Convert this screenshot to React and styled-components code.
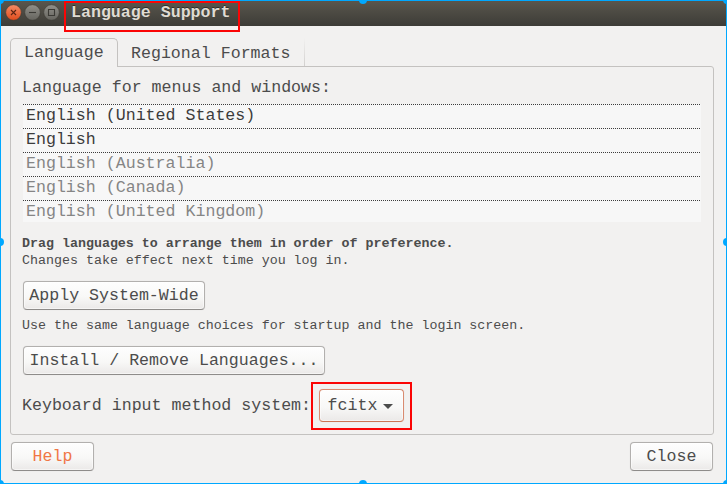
import React from 'react';
import styled, { createGlobalStyle, css } from 'styled-components';

const GlobalStyle = createGlobalStyle`
  * { box-sizing: border-box; }
  body { margin: 0; background: #f2f1f0; }
`;

const Window = styled.main`
  position: relative;
  display: flex;
  flex-direction: column;
  width: 727px;
  height: 484px;
  overflow: hidden;
  border: 1px solid #00a8ff;
  background: #f2f1f0;
  color: #4c4c4c;
  font-family: 'Courier 10 Pitch', 'Liberation Mono', monospace;
  font-size: 16.62px;
  line-height: 20px;
  white-space: pre;
`;

const TitleBar = styled.header`
  display: flex;
  align-items: center;
  flex: 0 0 25px;
  padding: 0 0 2px 4px;
  background: linear-gradient(#59564d, #3d3c37);
`;

const WindowButtons = styled.div`
  display: flex;
  gap: 2px;
  width: 66px;
  height: 17px;
`;

const WindowButton = styled.svg`
  display: block;
  width: 17px;
  height: 17px;
`;

const Title = styled.h1`
  margin: 0;
  color: #dfdbd2;
  font-size: 16.62px;
  line-height: 20px;
  text-shadow: 0 -1px #302f2b;
`;

const Tabs = styled.nav`
  display: flex;
  align-items: flex-end;
  height: 40px;
  padding-left: 9px;
`;

const Tab = styled.div`
  height: 28px;
  padding: 6px 12px 0 13px;
  ${({ $active }) => $active ? css`
    position: relative;
    z-index: 1;
    width: 108px;
    height: 29px;
    margin-bottom: -1px;
    padding-top: 4px;
    border: 1px solid #c4c2c0;
    border-bottom: 0;
    border-radius: 5px 5px 0 0;
    background: #f2f1f0;
  ` : css`
    width: 187px;
    background: linear-gradient(transparent, #d2d0ce) right / 1px 100% no-repeat;
  `}
`;

const Panel = styled.section`
  display: flex;
  flex-direction: column;
  align-items: flex-start;
  width: 704px;
  height: 369px;
  margin-left: 9px;
  padding: 11px 12px 0 11px;
  border: 1px solid #c4c2c0;
  border-radius: 0 3px 3px 3px;
`;

const List = styled.ul`
  width: 678px;
  margin: 6px 0 13px 1px;
  padding: 0;
  list-style: none;
  background: #f7f7f7;
`;

const Language = styled.li`
  height: 24px;
  padding: 1px 3px 0;
  line-height: 21px;
  color: ${({ $muted }) => ($muted ? '#858585' : '#3c3c3c')};
  background: repeating-linear-gradient(90deg, #3c3c3c 0 1px, transparent 1px 2px) top / 100% 1px no-repeat;
  &:last-child { height: 22px; }
`;

const Note = styled.p`
  margin: 0;
  font-size: 13.32px;
  line-height: 17px;
  font-weight: ${({ $bold }) => ($bold ? 700 : 400)};
`;

const Button = styled.button`
  display: flex;
  align-items: center;
  justify-content: center;
  width: ${({ $width }) => $width}px;
  height: ${({ $height = 29 }) => $height}px;
  padding: 1px ${({ $focused }) => ($focused ? 2 : 0)}px 0 0;
  border: 1px solid ${({ $focused }) => ($focused ? '#d98b70' : '#b2b0ae')};
  border-bottom-color: ${({ $focused }) => ($focused ? '#cd7453' : '#8e8c8a')};
  border-radius: 4px;
  background: linear-gradient(#fefefe, #f8f8f7 55%, #ebe9e8);
  box-shadow: inset 0 0 0 1px rgba(255, 255, 255, .5), 0 0 1px rgba(0, 0, 0, .12);
  color: ${({ $accent }) => ($accent ? '#f07746' : '#4c4c4c')};
  font: inherit;
`;

const ApplyButton = styled(Button)`margin: 12px 0 7px 1px;`;
const InstallButton = styled(Button)`margin: 12px 0 0 1px;`;

const InputRow = styled.div`
  display: flex;
  align-items: center;
  gap: 7px;
  margin-top: 14px;
`;

const InputLabel = styled.label`
  width: 290px;
`;

const Arrow = styled.svg`
  width: 10px;
  height: 5px;
  margin: 0 0 0 6px;
`;

const Footer = styled.footer`
  display: flex;
  justify-content: space-between;
  padding: 7px 13px 0 10px;
`;

const Highlight = styled.div`
  position: absolute;
  z-index: 3;
  left: ${({ $x }) => $x - 1}px;
  top: ${({ $y }) => $y - 1}px;
  width: ${({ $w }) => $w}px;
  height: ${({ $h }) => $h}px;
  border: 2px solid #fb0505;
  pointer-events: none;
`;

const Handle = styled.div`
  position: absolute;
  z-index: 4;
  left: ${({ $x }) => $x}px;
  top: ${({ $y }) => $y}px;
  width: 8px;
  height: 8px;
  border-radius: 50%;
  background: #00a8ff;
`;

const languages = ['English (United States)', 'English', 'English (Australia)', 'English (Canada)', 'English (United Kingdom)'];
const handles = [[-5, -5], [358, -5], [722, -5], [-5, 237], [722, 237], [-5, 479], [358, 479], [722, 479]];
const symbols = {
  close: 'M6 6 11 11M11 6 6 11',
  minimize: 'M5 8.5H12',
  maximize: 'M5.5 5.5H11.5V11.5H5.5Z',
};

function Control({ type }) {
  const close = type === 'close';
  return (
    <WindowButton viewBox="0 0 17 17" aria-label={type}>
      <defs>
        <linearGradient id={type} x2="0" y2="1">
          <stop stopColor={close ? '#f58b65' : '#91908a'} />
          <stop offset="1" stopColor={close ? '#df4c1c' : '#65645e'} />
        </linearGradient>
      </defs>
      <circle cx="8.5" cy="8.5" r="7.8" fill={`url(#${type})`} stroke="#3c3a34" strokeWidth=".6" />
      <path d={symbols[type]} fill="none" stroke={close ? '#5b2513' : '#3b3a35'} strokeWidth="1.1" />
    </WindowButton>
  );
}

export default function App() {
  return (
    <>
      <GlobalStyle />
      <Window>
        <TitleBar>
          <WindowButtons>
            <Control type="close" /><Control type="minimize" /><Control type="maximize" />
          </WindowButtons>
          <Title>Language Support</Title>
        </TitleBar>
        <Tabs><Tab $active>Language</Tab><Tab>Regional Formats</Tab></Tabs>
        <Panel>
          <span>Language for menus and windows:</span>
          <List>
            {languages.map((name, i) => <Language key={name} $muted={i > 1}>{name}</Language>)}
          </List>
          <Note $bold>Drag languages to arrange them in order of preference.</Note>
          <Note>Changes take effect next time you log in.</Note>
          <ApplyButton $width={182}>Apply System-Wide</ApplyButton>
          <Note>Use the same language choices for startup and the login screen.</Note>
          <InstallButton $width={302}>Install / Remove Languages...</InstallButton>
          <InputRow>
            <InputLabel>Keyboard input method system:</InputLabel>
            <Button $width={85} $height={33} $focused>
              fcitx
              <Arrow viewBox="0 0 10 5"><path d="M0 0H10L5 5Z" fill="#4c4c4c" /></Arrow>
            </Button>
          </InputRow>
        </Panel>
        <Footer><Button $width={83} $accent>Help</Button><Button $width={83}>Close</Button></Footer>
        <Highlight $x={64} $y={1} $w={176} $h={31} />
        <Highlight $x={311} $y={382} $w={101} $h={48} />
        {handles.map(([x, y]) => <Handle key={`${x}:${y}`} $x={x} $y={y} />)}
      </Window>
    </>
  );
}
